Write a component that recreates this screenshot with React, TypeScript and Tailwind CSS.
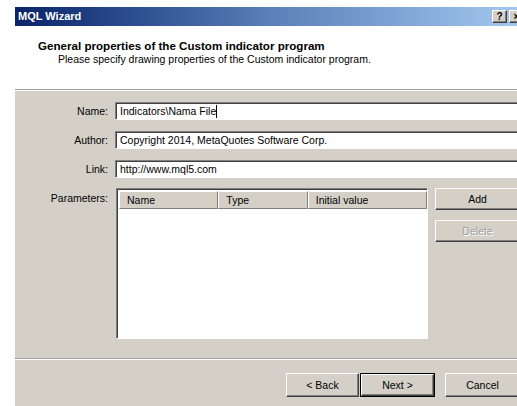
import React from "react";

const raised =
  "bg-[#d4d0c8] border border-t-white border-l-white border-r-[#404040] border-b-[#404040] shadow-[inset_-1px_-1px_0_#808080]";
const sunken =
  "bg-white border border-t-[#808080] border-l-[#808080] border-r-white border-b-white shadow-[inset_1px_1px_0_#404040]";

function Field({ label, value, caret }: { label: string; value: string; caret?: boolean }) {
  return (
    <div className="flex items-center h-[18px]">
      <div className="w-[93px] text-right">{label}</div>
      <div className={`ml-[7px] flex-1 h-[18px] flex items-center pl-[4px] ${sunken}`}>
        <span>{value}</span>
        {caret && <span className="inline-block w-px h-[13px] bg-black" />}
      </div>
    </div>
  );
}

function HeaderCell({ text, w }: { text: string; w: string }) {
  return (
    <div className={`${w} h-[18px] flex items-center pl-[7px] bg-[#d4d0c8] border border-t-white border-l-white border-r-[#808080] border-b-[#808080]`}>
      {text}
    </div>
  );
}

export default function App() {
  return (
    <div
      className="w-[517px] h-[406px] bg-white overflow-hidden text-[10.5px] text-black leading-none"
      style={{ fontFamily: '"Liberation Sans", Arial, sans-serif' }}
    >
      <div className="ml-[15px] mt-[7px] w-[511px] h-[399px] flex flex-col">
        {/* Title bar */}
        <div className="h-[19px] flex items-center bg-gradient-to-r from-[#0a246a] via-[#5b7fb8] to-[#a6caf0] pl-[3px] pr-[2px]">
          <span className="text-white font-bold text-[11px]">MQL Wizard</span>
          <div className="ml-auto flex gap-[2px]">
            <div className={`w-[15px] h-[13px] flex items-center justify-center font-bold text-[10px] ${raised}`}>?</div>
            <div className={`w-[15px] h-[13px] flex items-center justify-center font-bold text-[10px] ${raised}`}>×</div>
          </div>
        </div>

        {/* Header */}
        <div className="h-[64px] bg-white border-b border-[#a0a0a0] pl-[23px] pt-[14px]">
          <div className="font-bold text-[11.6px]">General properties of the Custom indicator program</div>
          <div className="mt-[2px] pl-[20px]">Please specify drawing properties of the Custom indicator program.</div>
        </div>

        {/* Body */}
        <div className="flex-1 bg-[#d4d0c8] border-t border-white flex flex-col">
          <div className="pt-[11px] flex flex-col gap-[11px]">
            <Field label="Name:" value="Indicators\Nama File" caret />
            <Field label="Author:" value="Copyright 2014, MetaQuotes Software Corp." />
            <Field label="Link:" value="http://www.mql5.com" />
          </div>

          <div className="flex mt-[10px]">
            <div className="w-[93px] text-right pt-[5px]">Parameters:</div>
            <div className={`ml-[8px] w-[312px] h-[151px] flex flex-col p-[2px] pr-0 ${sunken}`}>
              <div className="flex">
                <HeaderCell text="Name" w="w-[100px]" />
                <HeaderCell text="Type" w="w-[90px]" />
                <HeaderCell text="Initial value" w="w-[120px]" />
              </div>
            </div>
            <div className="ml-[7px] flex flex-col gap-[10px]">
              <div className={`w-[85px] h-[22px] flex items-center justify-center ${raised}`}>Add</div>
              <div
                className={`w-[85px] h-[22px] flex items-center justify-center text-[#a0a0a0] ${raised}`}
                style={{ textShadow: "1px 1px 0 #ffffff" }}
              >
                Delete
              </div>
            </div>
          </div>

          {/* Separator */}
          <div className="mt-[19px] border-t border-[#a0a0a0] border-b border-b-white" />

          <div className="mt-[13px] flex justify-end pr-[6px]">
            <div className={`w-[73px] h-[24px] flex items-center justify-center ${raised}`}>&lt; Back</div>
            <div className="w-[75px] h-[24px] border border-black ml-px">
              <div className={`w-full h-full flex items-center justify-center ${raised}`}>Next &gt;</div>
            </div>
            <div className={`ml-[10px] w-[75px] h-[24px] flex items-center justify-center ${raised}`}>Cancel</div>
          </div>
        </div>
      </div>
    </div>
  );
}
